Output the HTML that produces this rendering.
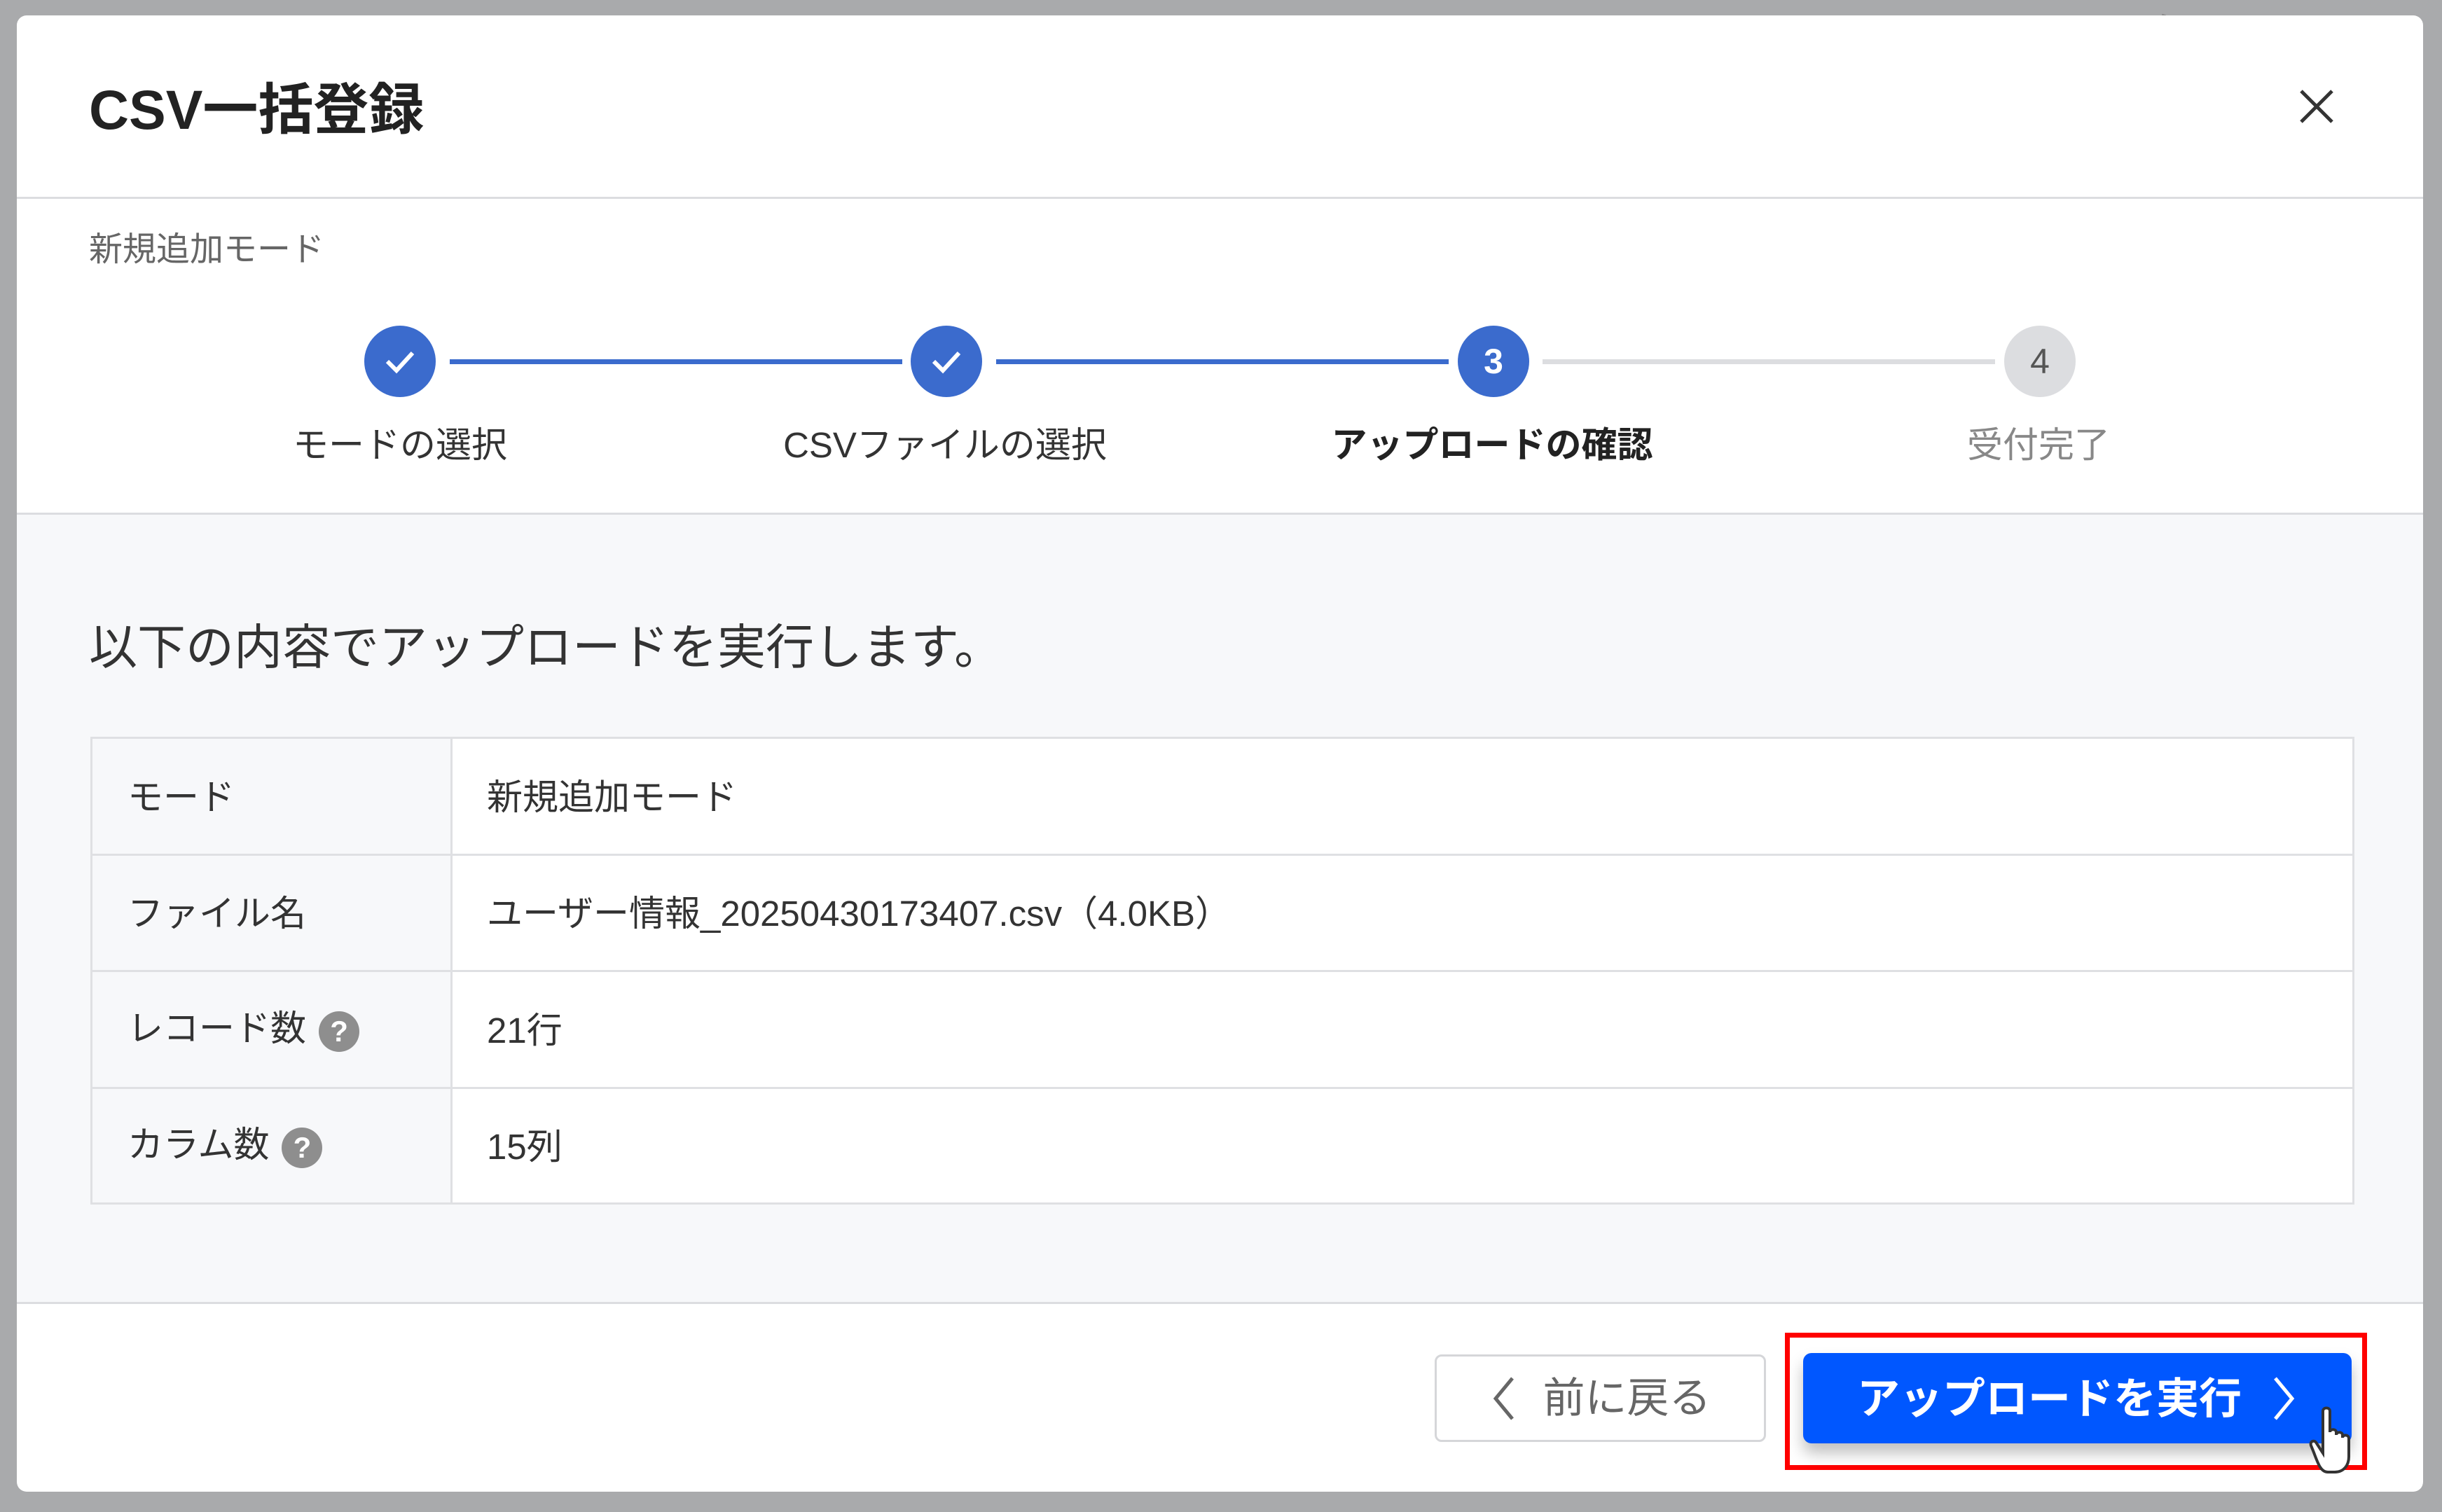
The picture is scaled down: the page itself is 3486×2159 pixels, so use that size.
<!DOCTYPE html>
<html><head><meta charset="utf-8"><style>
*{box-sizing:border-box;margin:0;padding:0}
body{width:3486px;height:2159px;background:#a9aaac;position:relative;overflow:hidden;font-family:"Liberation Sans","Noto Sans CJK JP",sans-serif;color:#333}
.a{position:absolute}
.modal{left:24px;top:22px;width:3435px;height:2108px;background:#fff;border-radius:14px;overflow:hidden}
.hl{height:3px;background:#dcdde0;left:0;width:3435px}
.circ{width:102px;height:102px;border-radius:51px;background:#3b6bcd;color:#fff;font-weight:bold;font-size:50px;display:flex;align-items:center;justify-content:center}
.lbl{font-size:51px;width:600px;text-align:center;top:572px;color:#333}
.row{left:0;width:3228px;border-top:3px solid #dfe0e3;}
.t{font-size:51px}
.q{display:inline-block;width:58px;height:58px;border-radius:29px;background:#8e8e8e;color:#fff;font-size:42px;font-weight:bold;text-align:center;line-height:58px;vertical-align:middle;margin-left:18px}
</style></head><body>
<div class="a" style="left:3060px;top:0;font-size:60px;color:#888">タリソー</div>
<div class="a modal">
  <div class="a" style="left:103px;top:70px;font-size:79px;font-weight:bold;color:#222">CSV一括登録</div>
  <svg class="a" style="left:3258px;top:105px" width="50" height="50" viewBox="0 0 50 50"><path d="M3 3L47 47M47 3L3 47" stroke="#333" stroke-width="5"/></svg>
  <div class="a hl" style="top:259px"></div>
  <div class="a" style="left:103px;top:294px;font-size:48px;color:#666">新規追加モード</div>
  <div class="a" style="left:618px;top:491px;width:646px;height:7px;background:#3b6bcd"></div>
  <div class="a" style="left:1398px;top:491px;width:646px;height:7px;background:#3b6bcd"></div>
  <div class="a" style="left:2178px;top:491px;width:646px;height:7px;background:#dcdde0"></div>
  <div class="a circ" style="left:496px;top:443px"><svg width="56" height="56" viewBox="0 0 56 56"><path d="M10 28L23 41L46 16" fill="none" stroke="#fff" stroke-width="6"/></svg></div>
  <div class="a circ" style="left:1276px;top:443px"><svg width="56" height="56" viewBox="0 0 56 56"><path d="M10 28L23 41L46 16" fill="none" stroke="#fff" stroke-width="6"/></svg></div>
  <div class="a circ" style="left:2057px;top:443px">3</div>
  <div class="a circ" style="left:2837px;top:443px;background:#dcdde0;color:#555;font-weight:normal">4</div>
  <div class="a lbl" style="left:247px">モードの選択</div>
  <div class="a lbl" style="left:1025px">CSVファイルの選択</div>
  <div class="a lbl" style="left:1806px;font-weight:bold;color:#222">アップロードの確認</div>
  <div class="a lbl" style="left:2586px;color:#888">受付完了</div>
  <div class="a hl" style="top:710px"></div>
  <div class="a" style="left:0;top:713px;width:3435px;height:1126px;background:#f7f8fa"></div>
  <div class="a" style="left:103px;top:846px;font-size:69px;color:#333">以下の内容でアップロードを実行します。</div>
  <div class="a" style="left:105px;top:1030px;width:3232px;height:668px;border:3px solid #dfe0e3;background:#fff">
    <div class="a" style="left:0;top:0;width:514px;height:662px;background:#f7f8fa;border-right:3px solid #dfe0e3"></div>
    <div class="a row" style="top:164px"></div>
    <div class="a row" style="top:330px"></div>
    <div class="a row" style="top:497px"></div>
    <div class="a t" style="left:50px;top:42px">モード</div>
    <div class="a t" style="left:563px;top:42px">新規追加モード</div>
    <div class="a t" style="left:50px;top:208px">ファイル名</div>
    <div class="a t" style="left:563px;top:208px">ユーザー情報_20250430173407.csv（4.0KB）</div>
    <div class="a t" style="left:50px;top:372px">レコード数<span class="q">?</span></div>
    <div class="a t" style="left:563px;top:375px">21行</div>
    <div class="a t" style="left:50px;top:538px">カラム数<span class="q">?</span></div>
    <div class="a t" style="left:563px;top:541px">15列</div>
  </div>
  <div class="a hl" style="top:1837px"></div>
  <div class="a" style="left:2024px;top:1912px;width:473px;height:125px;border:3px solid #d5d6d9;border-radius:10px;background:#fff;font-size:60px;color:#666;display:flex;align-items:center;justify-content:center;padding-bottom:10px">
    <svg width="40" height="70" viewBox="0 0 40 70" style="margin-right:36px;margin-top:10px"><path d="M32 6L8 35L32 64" fill="none" stroke="#666" stroke-width="5"/></svg>前に戻る</div>
  <div class="a" style="left:2524px;top:1881px;width:831px;height:196px;border:7px solid #f00"></div>
  <div class="a" style="left:2550px;top:1910px;width:783px;height:129px;border-radius:12px;background:#0057ff;box-shadow:0 14px 22px rgba(0,0,0,.25);color:#fff;font-weight:bold;font-size:61px;display:flex;align-items:center;justify-content:center;padding-bottom:10px">アップロードを実行<svg width="40" height="70" viewBox="0 0 40 70" style="margin-left:40px;margin-top:10px"><path d="M8 6L32 35L8 64" fill="none" stroke="#fff" stroke-width="5"/></svg></div>
  <svg class="a" style="left:3270px;top:1985px" width="70" height="100" viewBox="0 0 70 100"><path d="M22 8c0-6 10-6 10 0v30c0-5 9-5 9 0v4c0-5 9-5 9 0v4c0-5 9-5 9 1v26c0 12-7 22-20 22h-10c-10 0-14-12-20-28l-4-10c-2-6 5-9 8-3l9 14z" fill="#fff" stroke="#333" stroke-width="4"/></svg>
</div>
</body></html>
